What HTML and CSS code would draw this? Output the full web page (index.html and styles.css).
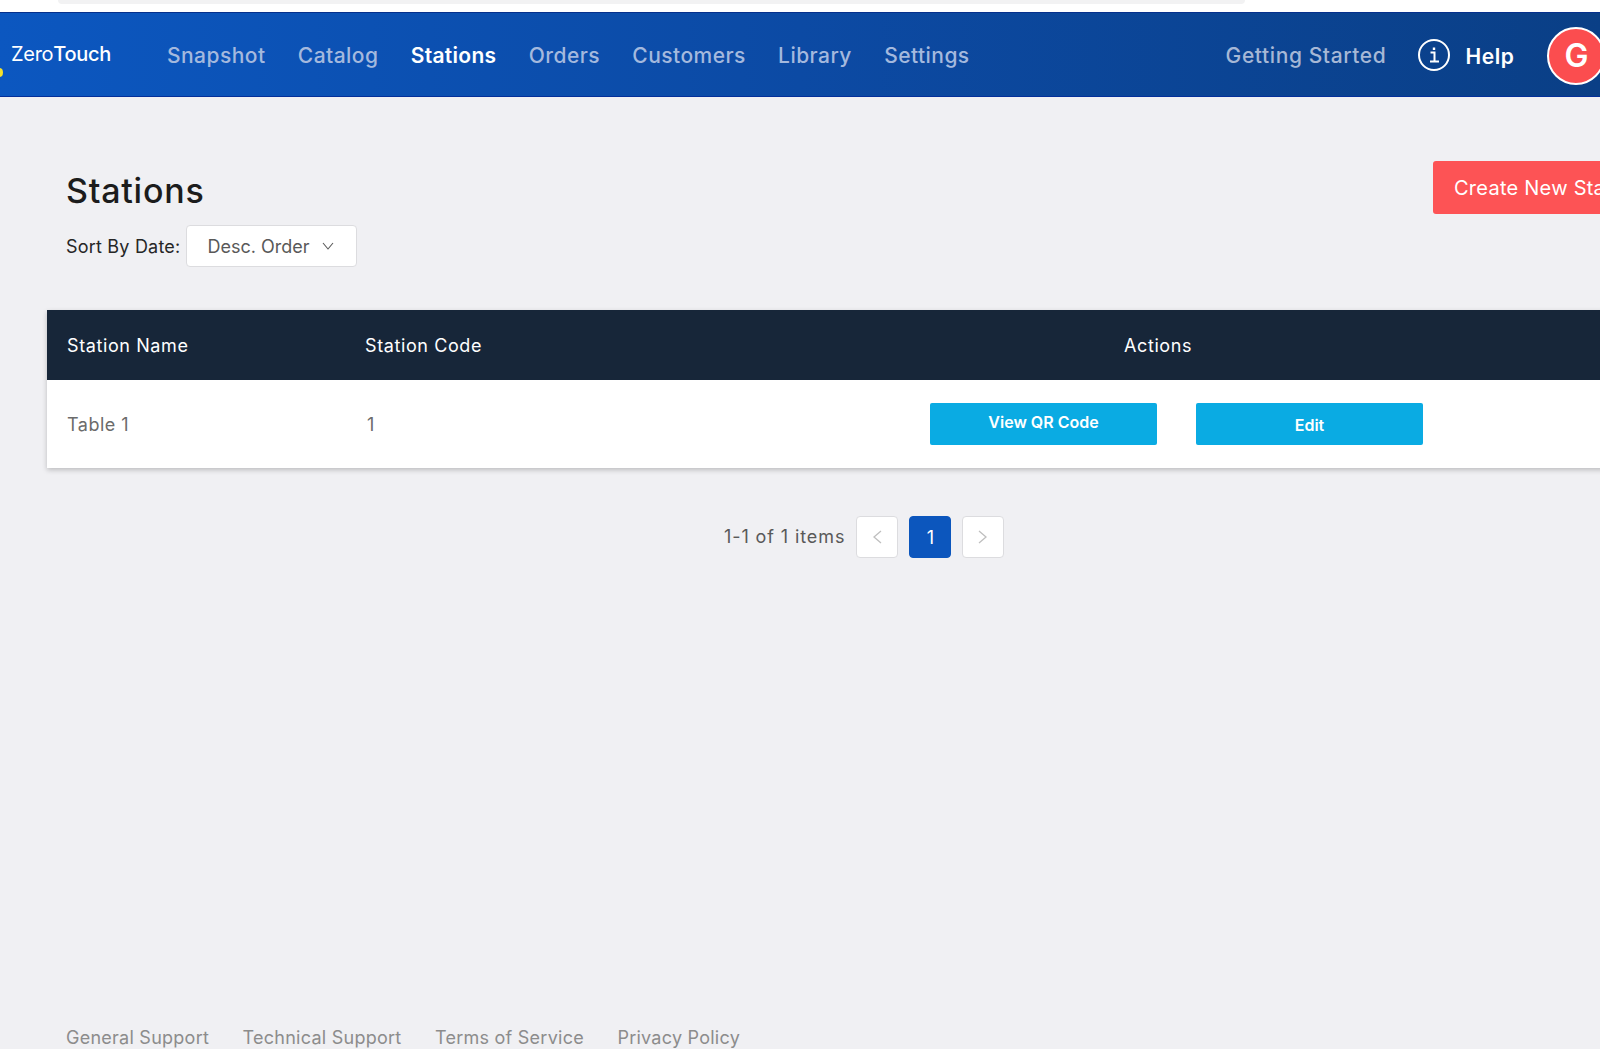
FILE: index.html
```html
<!DOCTYPE html>
<html lang="en">
<head>
    <meta charset="UTF-8">
    <title>Stations</title>
    <link rel="stylesheet" href="styles.css">
</head>
<body>
<div class="topstrip"><div class="topstrip_bar"></div></div>
<div class="nav">
    <div class="logo"><span class="logo_dot"></span>Zero<b>Touch</b></div>
    <div class="menu">
        <a>Snapshot</a>
        <a>Catalog</a>
        <a class="active">Stations</a>
        <a>Orders</a>
        <a>Customers</a>
        <a>Library</a>
        <a>Settings</a>
    </div>
    <div class="nav_right">
        <a class="started">Getting Started</a>
        <svg class="info" width="34" height="34" viewBox="0 0 34 34" fill="none" stroke="#fff">
            <circle cx="17" cy="17" r="15" stroke-width="2"/>
            <path d="M13.5 14.5H17.5V23M13 23.5H22" stroke-width="2"/>
            <path d="M17 9.5V12" stroke-width="2.4"/>
        </svg>
        <span class="help">Help</span>
        <div class="avatar">G</div>
    </div>
</div>
<div class="content">
    <div class="head">
        <div>
            <h1>Stations</h1>
            <div class="sort">
                <span class="sort_label">Sort By Date:</span>
                <div class="select">
                    Desc. Order
                    <svg width="12" height="8" viewBox="0 0 12 8" fill="none" stroke="#595959" stroke-width="1.1"><path d="M1 1L6 7L11 1"/></svg>
                </div>
            </div>
        </div>
        <button class="create">Create New Station</button>
    </div>
    <div class="table">
        <div class="row row_head">
            <div class="col_name">Station Name</div>
            <div class="col_code">Station Code</div>
            <div class="col_actions">Actions</div>
        </div>
        <div class="row row_body">
            <div class="col_name">Table 1</div>
            <div class="col_code">1</div>
            <div class="col_actions">
                <button class="btn btn_qr">View QR Code</button>
                <button class="btn btn_edit">Edit</button>
            </div>
        </div>
    </div>
    <div class="pager">
        <span class="pager_total">1-1 of 1 items</span>
        <div class="page">
            <svg width="10" height="14" viewBox="0 0 10 14" fill="none" stroke="#bfbfbf" stroke-width="1.3"><path d="M9 1L2 7L9 13"/></svg>
        </div>
        <div class="page page_on">1</div>
        <div class="page">
            <svg width="10" height="14" viewBox="0 0 10 14" fill="none" stroke="#bfbfbf" stroke-width="1.3"><path d="M1 1L8 7L1 13"/></svg>
        </div>
    </div>
</div>
<div class="footer">
    <a>General Support</a>
    <a>Technical Support</a>
    <a>Terms of Service</a>
    <a>Privacy Policy</a>
</div>
</body>
</html>
```
FILE: styles.css
```css
html, body {
    margin: 0;
    height: 1049px;
    overflow: hidden;
}

body {
    display: flex;
    flex-direction: column;
    width: 1600px;
    background-color: #f0f0f3;
    font-family: Inter, "Liberation Sans", sans-serif;
    color: #262626;
}

.topstrip {
    height: 12px;
    background-color: #fff;
}

.topstrip_bar {
    height: 4px;
    margin: 0 355px 0 58px;
    background-color: #f2f2f3;
    border-radius: 0 0 12px 12px;
}

.nav {
    display: flex;
    align-items: center;
    width: 1640px;
    height: 85px;
    background: linear-gradient(90deg, #0c57c0 0%, #0c4aa4 50%, #0a3f86 100%);
    background-size: 1600px 100%;
    background-repeat: no-repeat;
    background-color: #0a3f86;
    box-shadow: inset 0 1px 0 #06308c, inset 0 -1px 0 #042f9a;
}

.logo {
    position: relative;
    width: 167px;
    padding: 0 0 2px 11px;
    box-sizing: border-box;
    color: #fff;
    font-size: 20px;
    letter-spacing: -0.3px;
}

.logo b {
    font-weight: 500;
}

.logo_dot {
    position: absolute;
    left: -4px;
    top: 26px;
    width: 7px;
    height: 9px;
    border-radius: 50%;
    background-color: #f5e12a;
}

.menu {
    display: flex;
    gap: 32.3px;
    padding-top: 1px;
    font-size: 21px;
    font-weight: 500;
    letter-spacing: 0.45px;
    color: #a4b9de;
}

.menu .active {
    color: #fff;
    font-weight: 600;
    letter-spacing: 0.3px;
}

.nav_right {
    display: flex;
    align-items: center;
    margin-left: 256px;
}

.started {
    font-size: 21px;
    font-weight: 500;
    letter-spacing: 0.6px;
    color: #a6b8d6;
    padding-top: 1px;
}

.info {
    margin-left: 31px;
}

.help {
    margin-left: 14px;
    margin-top: 3px;
    color: #fff;
    font-size: 21px;
    font-weight: 600;
    letter-spacing: 0.6px;
}

.avatar {
    display: flex;
    align-items: center;
    justify-content: center;
    width: 54px;
    height: 54px;
    margin-left: 33px;
    margin-top: 2px;
    border: 2px solid #fff;
    border-radius: 50%;
    background-color: #fb4d4f;
    color: #fff;
    font-size: 32px;
    font-weight: 600;
}

.content {
    width: 1720px;
    padding-left: 47px;
    flex: 1;
}

.head {
    display: flex;
    justify-content: space-between;
    align-items: flex-start;
    padding: 74px 0 0 19px;
    width: 1673px;
    box-sizing: border-box;
    height: 213px;
}

h1 {
    margin: 0;
    font-size: 34px;
    font-weight: 500;
    letter-spacing: 0.75px;
    line-height: 40px;
    color: #1c1c1c;
}

.sort {
    display: flex;
    align-items: center;
    gap: 6px;
    margin-top: 14px;
    font-size: 18px;
    letter-spacing: 0.2px;
}

.select {
    display: flex;
    align-items: center;
    justify-content: space-between;
    width: 171px;
    height: 42px;
    padding: 0 22px 0 20px;
    box-sizing: border-box;
    background-color: #fff;
    border: 1px solid #dcdcdf;
    border-radius: 4px;
    color: #595959;
    letter-spacing: 0;
}

.create {
    width: 287px;
    height: 53px;
    margin-top: -10px;
    padding: 0 0 0 21px;
    text-align: left;
    border: 0;
    border-radius: 3px;
    background-color: #fd5355;
    color: #fff;
    font-family: inherit;
    font-size: 20px;
    letter-spacing: 0.25px;
}

.table {
    width: 1673px;
    background-color: #fff;
    box-shadow: 0 2px 5px rgba(0, 0, 0, 0.22);
}

.row {
    display: flex;
    align-items: center;
    padding-left: 20px;
}

.row_head {
    height: 70px;
    background-color: #172639;
    color: #fff;
    font-size: 18px;
    letter-spacing: 0.6px;
}

.row_body {
    height: 88px;
    color: #6b6b6b;
    font-size: 18px;
    letter-spacing: 0.5px;
}

.col_name {
    width: 298px;
}

.col_code {
    width: 565px;
}

.row_body .col_code {
    text-indent: 2px;
}

.col_actions {
    display: flex;
    gap: 39px;
}

.row_head .col_actions {
    padding-left: 194px;
}

.btn {
    width: 227px;
    height: 42px;
    border: 0;
    border-radius: 2px;
    background-color: #0aabe3;
    color: #fff;
    font-family: inherit;
    font-size: 16px;
    font-weight: 600;
    letter-spacing: 0;
}

.btn_qr {
    padding-bottom: 5px;
}

.btn_edit {
    padding-top: 2px;
}

.pager {
    display: flex;
    align-items: center;
    gap: 11px;
    width: 1506px;
    padding: 48px 0 0 677px;
    box-sizing: border-box;
    font-size: 18px;
}

.pager_total {
    color: #595959;
    letter-spacing: 0.9px;
    padding-bottom: 2px;
}

.page {
    display: flex;
    align-items: center;
    justify-content: center;
    width: 42px;
    height: 42px;
    box-sizing: border-box;
    background-color: #fff;
    border: 1px solid #dcdcdf;
    border-radius: 4px;
}

.page_on {
    background-color: #0c56bd;
    border-color: #0c56bd;
    color: #fff;
}

.footer {
    display: flex;
    gap: 33.5px;
    height: 22px;
    padding-left: 66px;
    font-size: 18px;
    letter-spacing: 0.25px;
    color: #8c8c8c;
}
```
